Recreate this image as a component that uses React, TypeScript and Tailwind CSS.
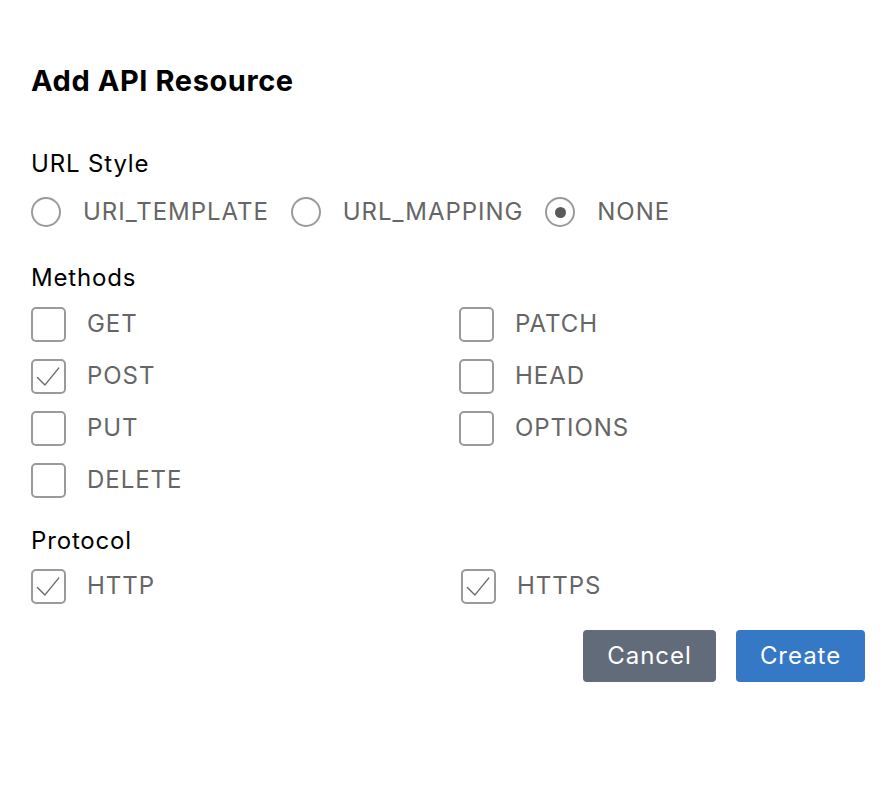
import React, { useState } from "react";

const font = { fontFamily: "Inter, 'Liberation Sans', sans-serif" };

function Radio({ label, checked, onClick }: { label: string; checked: boolean; onClick: () => void }) {
  return (
    <button type="button" onClick={onClick} className="flex items-center gap-[22px] h-[30px]">
      <span className="w-[30px] h-[30px] rounded-full border-2 border-[#9a9a9a] flex items-center justify-center bg-white">
        {checked && <span className="w-[11px] h-[11px] rounded-full bg-[#5a5a5a]" />}
      </span>
      <span className="text-[24px] leading-[30px] tracking-[0.04em] text-[#666666]">{label}</span>
    </button>
  );
}

function Check({ label, checked, onClick }: { label: string; checked: boolean; onClick: () => void }) {
  return (
    <button type="button" onClick={onClick} className="flex items-center gap-[21px] h-[34px]">
      <span className="w-[35px] h-[35px] rounded-[5px] border-2 border-[#9a9a9a] bg-white flex items-center justify-center">
        {checked && (
          <svg width="35" height="35" viewBox="0 0 35 35" fill="none">
            <path d="M5 18.5 L13.5 27 L29 8" stroke="#6a6a6a" strokeWidth="1.6" strokeLinecap="round" strokeLinejoin="round" />
          </svg>
        )}
      </span>
      <span className="text-[24px] leading-[30px] tracking-[0.04em] text-[#666666]">{label}</span>
    </button>
  );
}

export default function App() {
  const [style, setStyle] = useState("NONE");
  const [methods, setMethods] = useState<Record<string, boolean>>({ POST: true });
  const [proto, setProto] = useState<Record<string, boolean>>({ HTTP: true, HTTPS: true });

  const left = ["GET", "POST", "PUT", "DELETE"];
  const right = ["PATCH", "HEAD", "OPTIONS"];
  const order = [left[0], right[0], left[1], right[1], left[2], right[2], left[3]];

  return (
    <div className="min-h-screen bg-white px-[31px] pt-[63px]" style={font}>
      <h2 className="text-[29px] leading-[36px] font-bold text-black tracking-[0.02em]">Add API Resource</h2>

      <div className="mt-[50px] text-[24px] leading-[30px] tracking-[0.035em] text-black">URL Style</div>
      <div className="mt-[18px] flex items-center gap-[22px]">
        {["URI_TEMPLATE", "URL_MAPPING", "NONE"].map((s) => (
          <Radio key={s} label={s} checked={style === s} onClick={() => setStyle(s)} />
        ))}
      </div>

      <div className="mt-[36px] text-[24px] leading-[30px] tracking-[0.035em] text-black">Methods</div>
      <div className="mt-[14px] grid grid-cols-2 gap-x-[22px] gap-y-[18px]">
        {order.map((m) => (
          <Check key={m} label={m} checked={!!methods[m]} onClick={() => setMethods({ ...methods, [m]: !methods[m] })} />
        ))}
      </div>

      <div className="mt-[29px] text-[24px] leading-[30px] tracking-[0.035em] text-black">Protocol</div>
      <div className="mt-[13px] grid grid-cols-2 gap-x-[26px]">
        {["HTTP", "HTTPS"].map((p) => (
          <Check key={p} label={p} checked={!!proto[p]} onClick={() => setProto({ ...proto, [p]: !proto[p] })} />
        ))}
      </div>

      <div className="mt-[27px] flex justify-end gap-[20px]">
        <button type="button" className="w-[133px] h-[52px] rounded-[4px] bg-[#626b79] text-white text-[24px] tracking-[0.04em]">Cancel</button>
        <button type="button" className="w-[129px] h-[52px] rounded-[4px] bg-[#3478c6] text-white text-[24px] tracking-[0.04em]">Create</button>
      </div>
    </div>
  );
}
